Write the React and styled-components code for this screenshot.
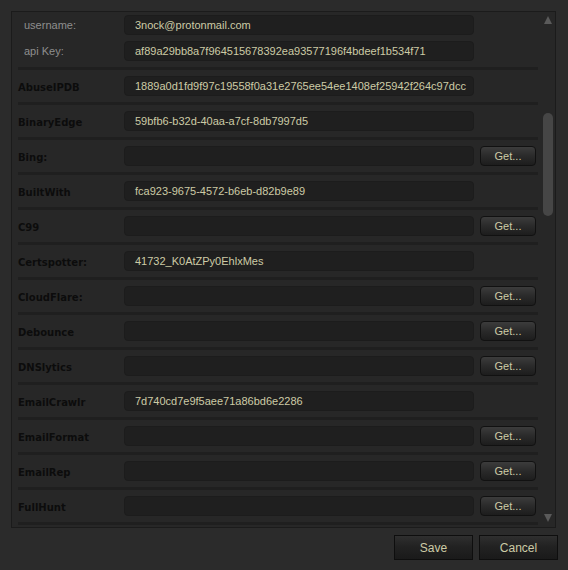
import styled, { createGlobalStyle } from "styled-components"

const GlobalStyle = createGlobalStyle`
    html, body {
        margin: 0;
        padding: 0;
        background: #2b2b2b;
    }
    body {
        font-family: "Liberation Sans", Arial, sans-serif;
        font-size: 11px;
    }
`;

const Dialog = styled.div`
    width: 568px;
    height: 570px;
    box-sizing: border-box;
    padding: 11px 11px 0 11px;
    display: flex;
    flex-direction: column;
    background: #2b2b2b;
`;

const Panel = styled.div`
    height: 517px;
    width: 545px;
    box-sizing: border-box;
    border: 1px solid #1b1b1b;
    background: #272727;
    display: flex;
    overflow: hidden;
`;

const Content = styled.div`
    width: 526px;
    display: flex;
    flex-direction: column;
`;

const Header = styled.div`
    display: flex;
    flex-direction: column;
    gap: 6px;
    padding: 3px 0 6px 6px;
`;

const Row = styled.div`
    display: flex;
    align-items: center;
    height: 32px;
    padding-left: 6px;
`;

const HeadRow = styled.div`
    display: flex;
    align-items: center;
    height: 20px;
`;

const Label = styled.div`
    width: ${p => (p.$head ? "100px" : "106px")};
    padding-left: ${p => (p.$head ? "6px" : "0")};
    padding-top: ${p => (p.$head ? "0" : "2px")};
    flex-shrink: 0;
    color: ${p => (p.$head ? "#8e8e8e" : "#0c0c0c")};
    font-family: ${p => (p.$head
        ? '"Liberation Sans", Arial, sans-serif'
        : '"DejaVu Sans", Verdana, sans-serif')};
    font-weight: ${p => (p.$head ? "normal" : "bold")};
    font-size: ${p => (p.$head ? "11px" : "10px")};
    white-space: nowrap;
`;

const Field = styled.div`
    width: 350px;
    height: 20px;
    box-sizing: border-box;
    border: 1px solid #1c1c1c;
    border-radius: 4px;
    background: #1f1f1f;
    color: #cdcba6;
    padding-left: 10px;
    display: flex;
    align-items: center;
    flex-shrink: 0;
    white-space: nowrap;
    overflow: hidden;
    font-size: 11px;
`;

const GetButton = styled.button`
    margin-left: 6px;
    width: 56px;
    height: 20px;
    box-sizing: border-box;
    border: 1px solid #111;
    border-radius: 4px;
    background: linear-gradient(#3c3c3c, #2a2a2a 50%, #1d1d1d);
    color: #cdcba6;
    font-family: "Liberation Sans", Arial, sans-serif;
    font-size: 11px;
    padding: 0;
`;

const Separator = styled.div`
    height: 3px;
    margin-left: 6px;
    background: #1f1f1f;
    flex-shrink: 0;
`;

const ScrollBar = styled.div`
    flex: 1;
    display: flex;
    flex-direction: column;
    align-items: center;
    padding: 4px 0 5px 3px;
`;

const Arrow = styled.div`
    width: 0;
    height: 0;
    border-left: 4px solid transparent;
    border-right: 4px solid transparent;
    ${p => (p.$down
        ? "border-top: 8px solid #5a5a5a;"
        : "border-bottom: 8px solid #5a5a5a;")}
`;

const Track = styled.div`
    flex: 1;
    width: 10px;
`;

const Thumb = styled.div`
    width: 10px;
    height: 103px;
    border-radius: 5px;
    background: #464646;
`;

const Footer = styled.div`
    display: flex;
    justify-content: flex-end;
    gap: 6px;
    padding-top: 7px;
    margin-right: -1px;
`;

const DialogButton = styled.button`
    width: 79px;
    height: 25px;
    box-sizing: border-box;
    border: 1px solid #0e0e0e;
    background: linear-gradient(#2f2f2f, #222 45%, #1a1a1a);
    color: #cdcba6;
    font-family: "Liberation Sans", Arial, sans-serif;
    font-size: 12px;
    padding: 0;
`;

const services = [
    { name: "AbuseIPDB", value: "1889a0d1fd9f97c19558f0a31e2765ee54ee1408ef25942f264c97dcc" },
    { name: "BinaryEdge", value: "59bfb6-b32d-40aa-a7cf-8db7997d5" },
    { name: "Bing:", get: true },
    { name: "BuiltWith", value: "fca923-9675-4572-b6eb-d82b9e89" },
    { name: "C99", get: true },
    { name: "Certspotter:", value: "41732_K0AtZPy0EhlxMes" },
    { name: "CloudFlare:", get: true },
    { name: "Debounce", get: true },
    { name: "DNSlytics", get: true },
    { name: "EmailCrawlr", value: "7d740cd7e9f5aee71a86bd6e2286" },
    { name: "EmailFormat", get: true },
    { name: "EmailRep", get: true },
    { name: "FullHunt", get: true },
];

const App = () => {
    return (
        <Dialog>
            <GlobalStyle />
            <Panel>
                <Content>
                    <Header>
                        <HeadRow>
                            <Label $head>username:</Label>
                            <Field>3nock@protonmail.com</Field>
                        </HeadRow>
                        <HeadRow>
                            <Label $head>api Key:</Label>
                            <Field>af89a29bb8a7f964515678392ea93577196f4bdeef1b534f71</Field>
                        </HeadRow>
                    </Header>
                    <Separator />
                    {services.map(s => (
                        <div key={s.name}>
                            <Row>
                                <Label>{s.name}</Label>
                                <Field>{s.value}</Field>
                                {s.get && <GetButton>Get...</GetButton>}
                            </Row>
                            <Separator />
                        </div>
                    ))}
                </Content>
                <ScrollBar>
                    <Arrow />
                    <Track>
                        <Thumb style={{ marginTop: 89 }} />
                    </Track>
                    <Arrow $down />
                </ScrollBar>
            </Panel>
            <Footer>
                <DialogButton>Save</DialogButton>
                <DialogButton>Cancel</DialogButton>
            </Footer>
        </Dialog>
    )
}

export default App
